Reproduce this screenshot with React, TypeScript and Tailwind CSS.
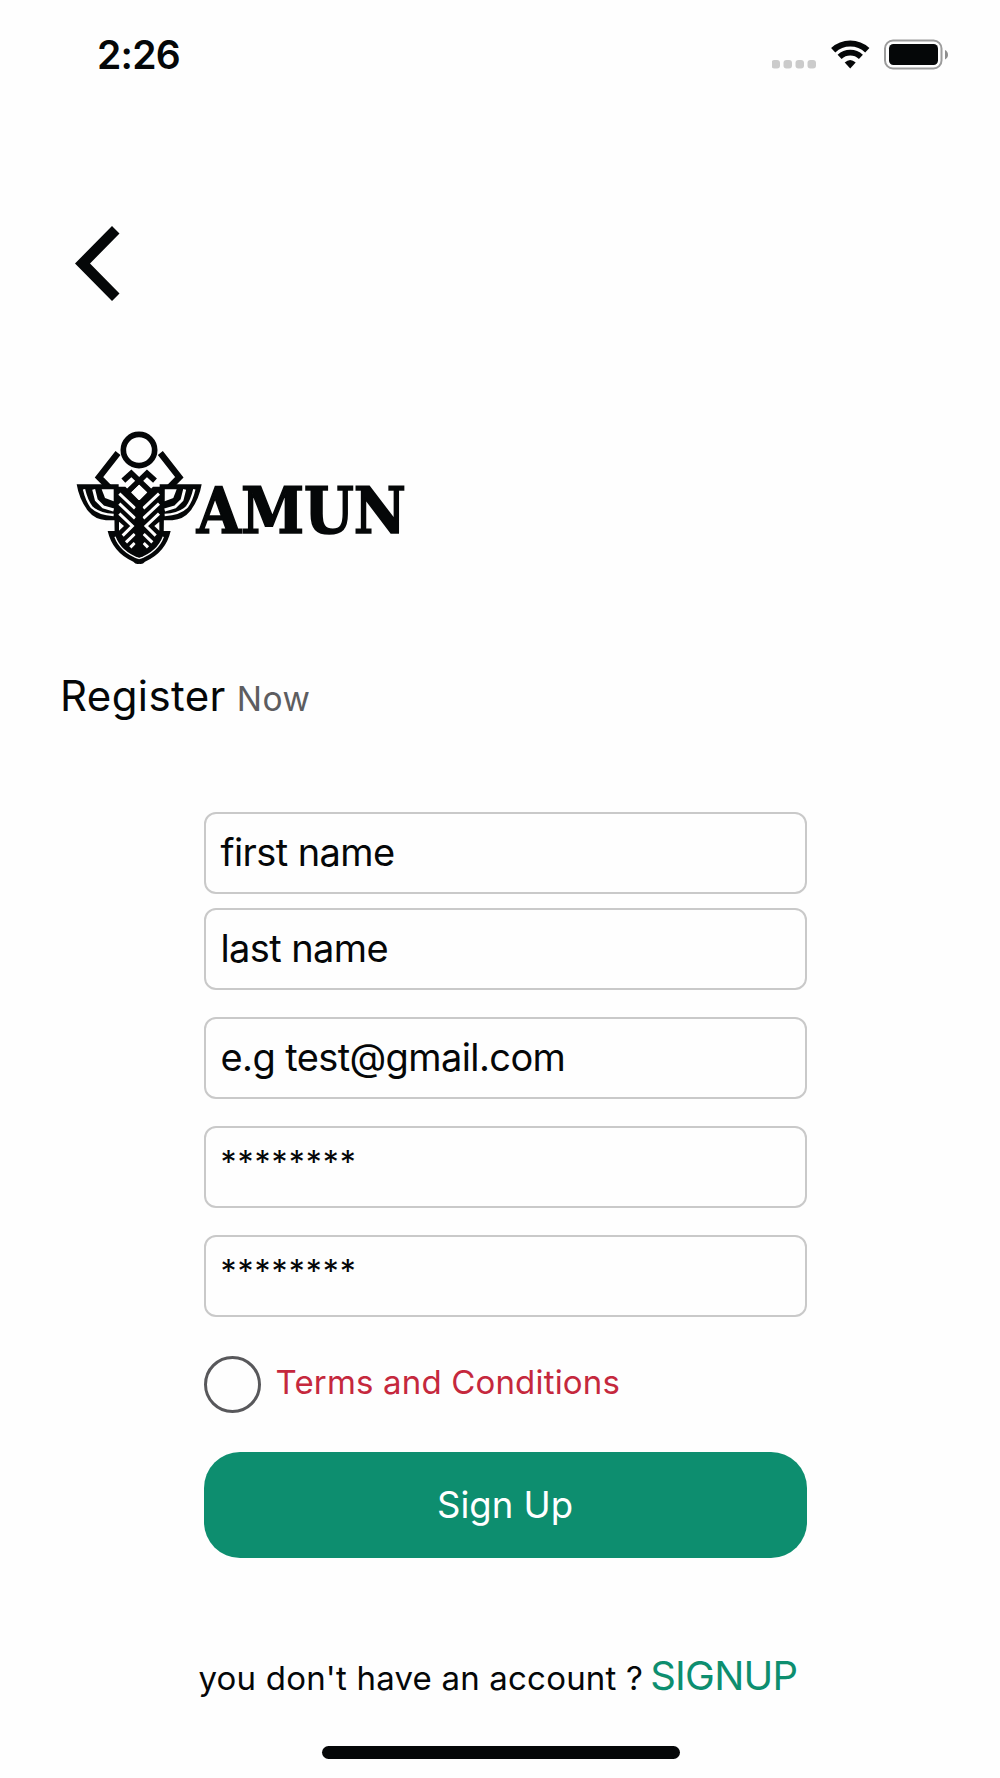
import React from "react";

interface FieldProps {
  value: string;
  className?: string;
  textClassName?: string;
}

const fields: FieldProps[] = [
  { value: "first name", textClassName: "text-[38px] tracking-[-0.6px] pb-[1px]" },
  { value: "last name", className: "mt-[14.5px]", textClassName: "text-[38px] tracking-[-0.6px] pb-[2px]" },
  { value: "e.g test@gmail.com", className: "mt-[26.5px]", textClassName: "text-[38px] tracking-[-0.6px] pb-[1px]" },
  { value: "********", className: "mt-[27px]", textClassName: "text-[32px] tracking-[1px] pb-[7px]" },
  { value: "********", className: "mt-[27px]", textClassName: "text-[32px] tracking-[1px] pb-[7px]" },
];

function StatusIcons() {
  return (
    <svg width="180" height="34" viewBox="0 0 180 34" aria-hidden="true">
      {[0, 12, 24, 36].map((x) => (
        <rect key={x} x={x - 0.5} y="22" width="8.5" height="8.5" rx="3" fill="#cbcbcb" />
      ))}
      {/* wifi */}
      <g fill="none" stroke="#050708">
        <path d="M61.2 12.2 A25 25 0 0 1 95.3 12.2" strokeWidth="6.2" />
        <path d="M67.6 18.9 A15.5 15.5 0 0 1 88.9 18.9" strokeWidth="5.8" />
      </g>
      <path d="M72.7 24.5 Q78.2 19.5 83.7 24.5 L78.2 30.5Z" fill="#050708" />
      {/* battery */}
      <rect x="113" y="2.5" width="56.5" height="28" rx="8" fill="none" stroke="#9c9c9c" strokeWidth="2" />
      <rect x="117" y="6" width="49" height="21" rx="4.5" fill="#050708" />
      <path d="M173 12 Q176 13.5 176 16.8 Q176 20 173 21.5Z" fill="#8e8e8e" />
    </svg>
  );
}

function ScarabHalf() {
  return (
    <>
      <path d="M144 99 L87 172 L118 203" fill="none" stroke="#050708" strokeWidth="19" />
      <path d="M160 182 L184 160 L243 217" fill="none" stroke="#050708" strokeWidth="17" />
      <path d="M20 193 H146 V301 H108 Q74 298 55 274 Q28 240 20 193Z" fill="#050708" />
      {/* gaps between the feathers */}
      <g fill="none" stroke="#fefefe">
        <path d="M42 208 Q50 242 64 260 Q84 282 131 285" strokeWidth="7" />
        <path d="M71 208 L79 240 L100 261 L131 270" strokeWidth="9" />
      </g>
      <path d="M95 208 H131 V244 L105 234Z" fill="#fefefe" />
      {/* carapace */}
      <path d="M132 200 H166 L208 242 V412 L150 350 H134Z" fill="#050708" />
      <path d="M113 333 H152 L208 380 V431 Q198 435 190 425 Q128 398 113 333Z" fill="#050708" />
      <g fill="none" stroke="#fefefe" strokeWidth="9">
        <path d="M148 221 L195 265" />
        <path d="M148 251 L195 295" />
        <path d="M148 281 L187 318 L158 347" />
        <path d="M194 342 L168 367" />
        <path d="M194 369 L181 382" />
      </g>
      <path d="M147 305 L162 318 L147 332Z" fill="#fefefe" />
      <path d="M135 350 Q152 396 208 416" fill="none" stroke="#fefefe" strokeWidth="4" />
    </>
  );
}

function Logo() {
  return (
    <svg className="block" width="400" height="150" viewBox="0 0 1200 450" role="img" aria-label="AMUN">
      <circle cx="207" cy="90" r="47" fill="none" stroke="#050708" strokeWidth="17" />
      <ScarabHalf />
      <g transform="translate(415 0) scale(-1 1)">
        <ScarabHalf />
      </g>
      <path d="M207.5 194 L230 216 L207.5 240 L185 216Z" fill="#fefefe" />
      <path d="M197 240 H218 V410 H197Z" fill="#050708" />
      <text
        x="380"
        y="338"
        fontSize="192"
        fontWeight="700"
        fontFamily="'DejaVu Serif', serif"
        textLength="628"
        lengthAdjust="spacingAndGlyphs"
        fill="#050708"
        stroke="#050708"
        strokeWidth="5"
      >
        AMUN
      </text>
    </svg>
  );
}

function Field({ value, className = "", textClassName = "" }: FieldProps) {
  return (
    <div className={`flex h-[82px] items-center rounded-[12px] border-2 border-[#c9c9c9] pl-[15px] ${className}`}>
      <span className={`whitespace-nowrap leading-[44px] ${textClassName}`}>{value}</span>
    </div>
  );
}

export default function App() {
  return (
    <div className="flex h-[1778px] w-[1000px] flex-col overflow-hidden bg-[#fefefe] font-['Inter',sans-serif] text-[#050708]">
      <header className="flex h-[110px] shrink-0 items-center justify-between pl-[97px] pr-[48px]">
        <span className="text-[39px] font-semibold leading-[110px] tracking-[-0.8px]">2:26</span>
        <StatusIcons />
      </header>

      <button className="ml-[75px] mt-[116px] h-[75px] w-[45px] shrink-0" aria-label="Back">
        <svg width="45" height="75" viewBox="0 0 45 75">
          <path d="M37 0 L44.5 7.5 L15 37.5 L44.5 67.5 L37 75 L0 37.5Z" fill="#050708" />
        </svg>
      </button>

      <div className="ml-[70px] mt-[119px] h-[150px] shrink-0">
        <Logo />
      </div>

      <h1 className="ml-[60px] mt-[96px] flex h-[60px] shrink-0 items-baseline leading-[60px]">
        <span className="text-[42px] tracking-[0.4px]">Register</span>
        <span className="ml-[11px] text-[33.5px] tracking-[0.5px] text-[#5d5d60]">Now</span>
      </h1>

      <form className="ml-[203.5px] mt-[85.5px] flex w-[603px] shrink-0 flex-col">
        {fields.map((field, index) => (
          <Field key={index} {...field} />
        ))}

        <label className="mt-[38.5px] flex h-[58px] items-center">
          <span className="h-[57px] w-[57px] rounded-full border-[3px] border-[#58585b]" />
          <span className="ml-[15px] whitespace-nowrap pb-[2px] text-[33px] tracking-[0.17px] text-[#c5283d]">
            Terms and Conditions
          </span>
        </label>

        <button
          type="button"
          className="mt-[38.5px] h-[106px] rounded-[36px] bg-[#0d8e6f] pt-[2px] text-[36.5px] text-white"
        >
          Sign Up
        </button>
      </form>

      <p className="ml-[198.5px] mt-[88.5px] flex h-[60px] shrink-0 items-baseline whitespace-nowrap leading-[60px]">
        <span className="text-[33px] tracking-[0.2px]">you don't have an account ?</span>
        <a className="ml-[7px] text-[40px] tracking-[-0.75px] text-[#0d8e6f]">SIGNUP</a>
      </p>

      <div className="ml-[321.5px] mt-auto mb-[19px] h-[13px] w-[358px] shrink-0 rounded-full bg-[#050708]" />
    </div>
  );
}
